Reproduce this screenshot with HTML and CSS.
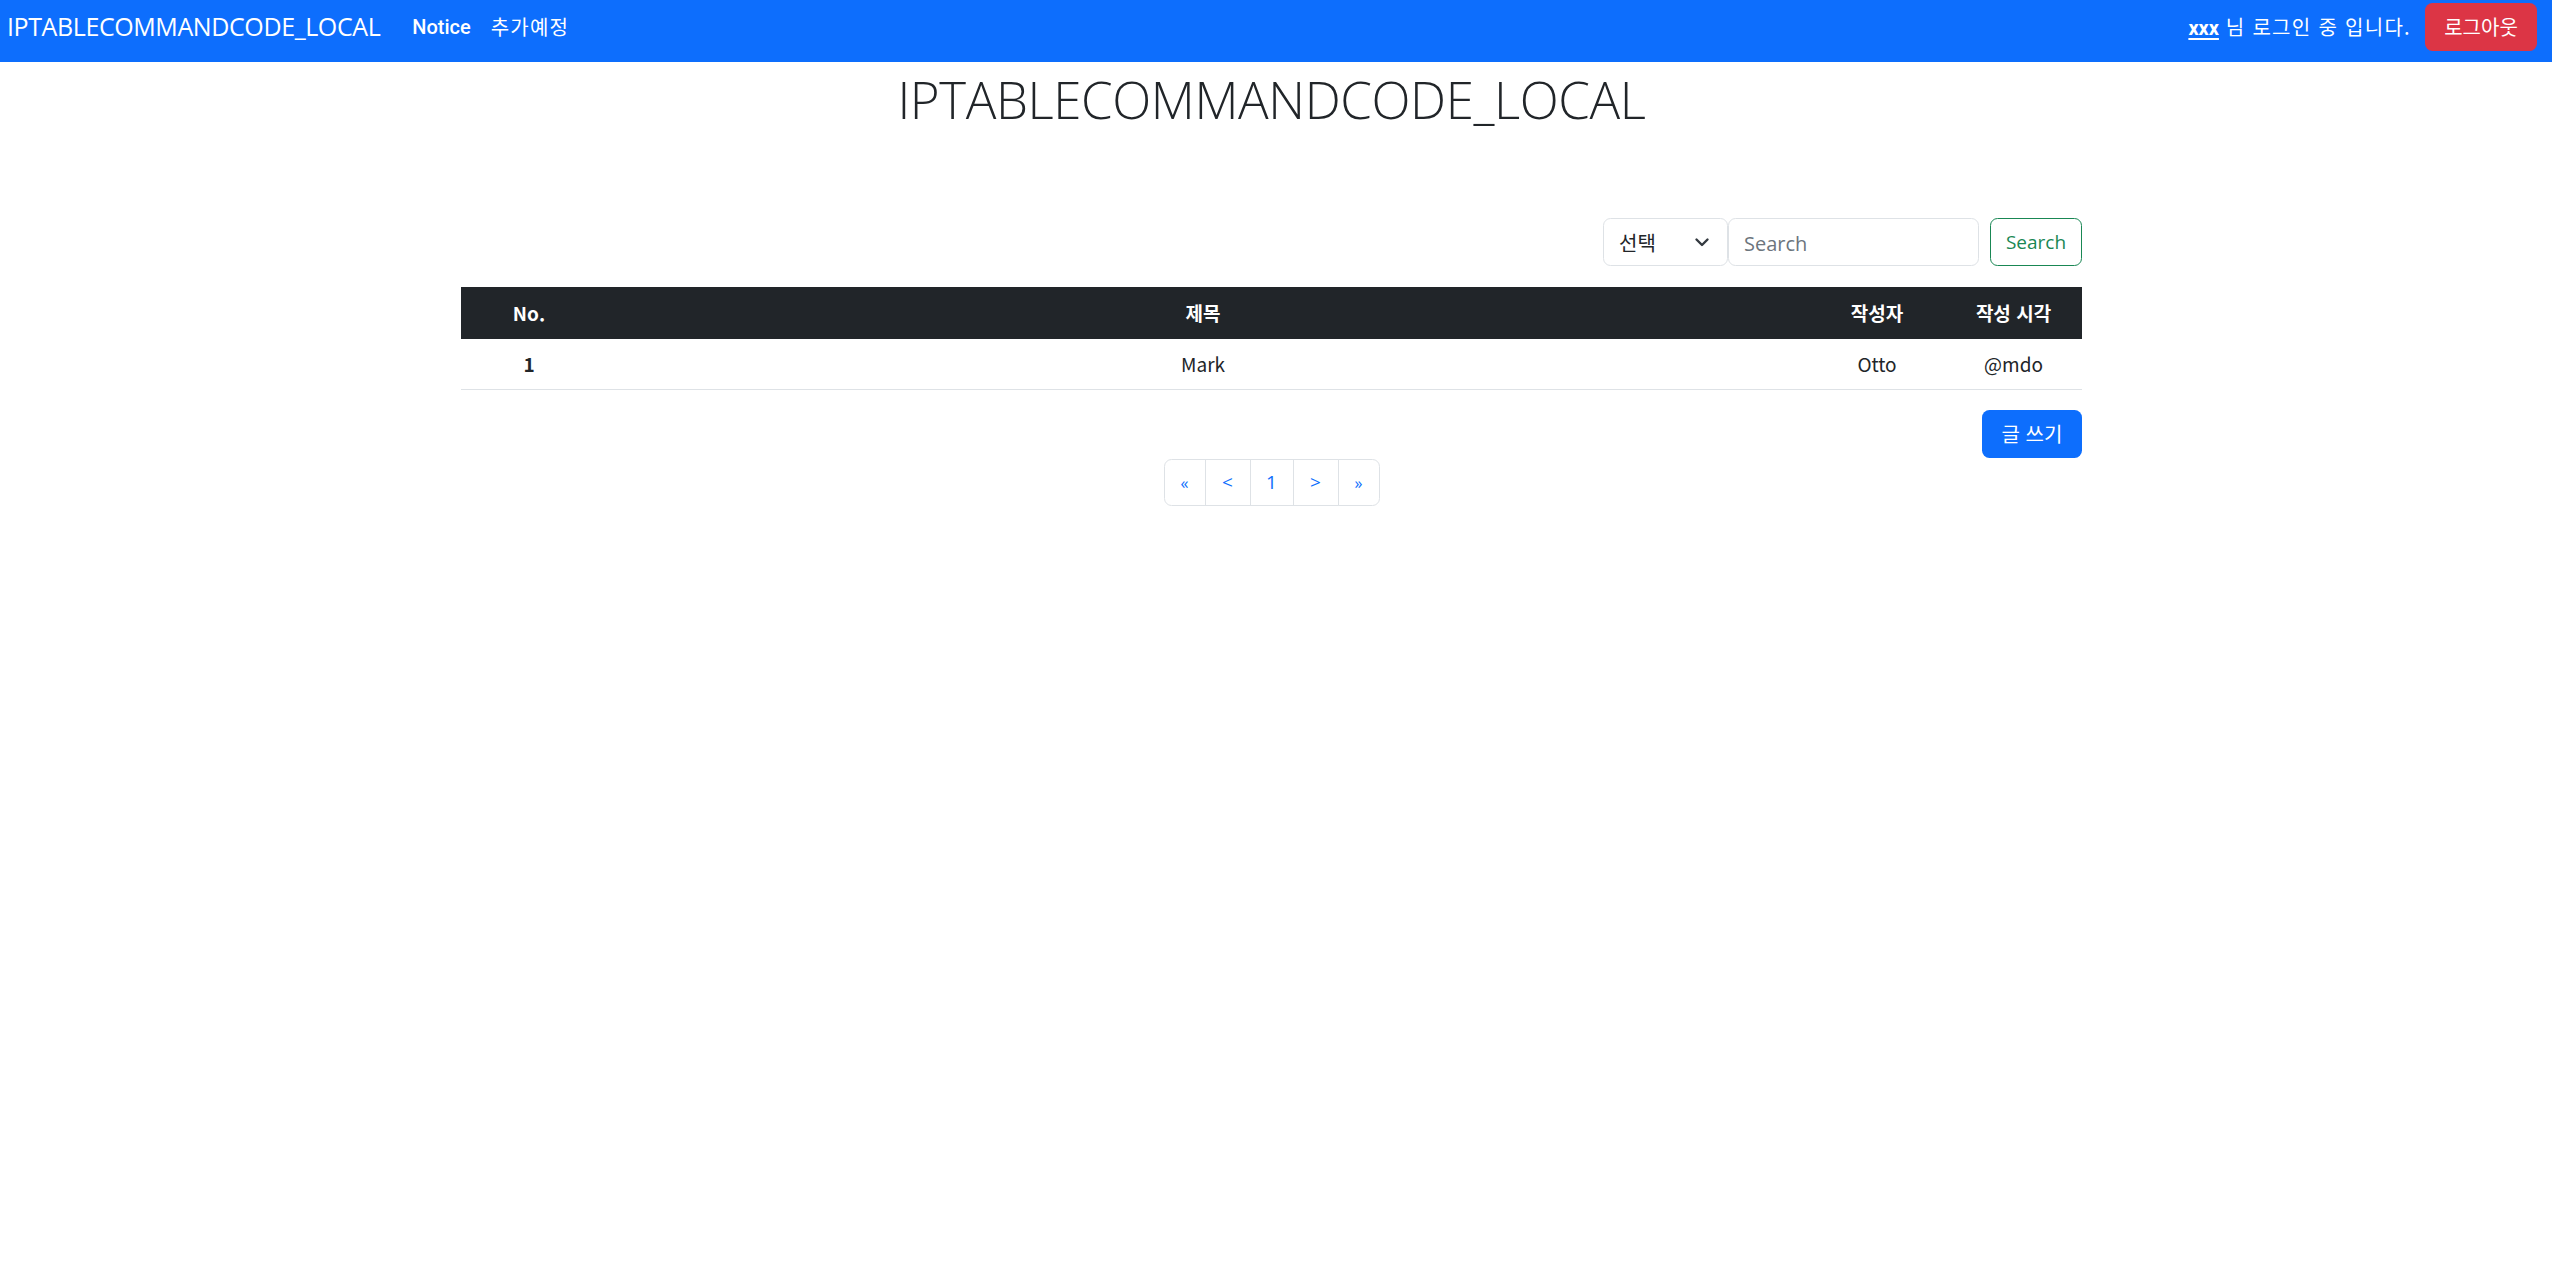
FILE: index.html
```html
<!DOCTYPE html>
<html lang="ko">
<head>
<meta charset="utf-8">
<title>IPTABLECOMMANDCODE_LOCAL</title>
<link rel="stylesheet" href="styles.css">
</head>
<body>
<nav class="navbar">
  <div class="nav-left">
    <a class="brand" href="#">IPTABLECOMMANDCODE_LOCAL</a>
    <a class="nav-link nav-link-strong" href="#">Notice</a>
    <a class="nav-link nav-link-kr" href="#">추가예정</a>
  </div>
  <div class="nav-right">
    <span class="login-text"><a class="user-name" href="#">xxx</a> 님 로그인 중 입니다.</span>
    <button class="btn btn-danger" type="button">로그아웃</button>
  </div>
</nav>

<main class="container">
  <h1 class="page-title">IPTABLECOMMANDCODE_LOCAL</h1>

  <form class="search-form">
    <div class="select-wrap">
      <select class="form-select">
        <option>선택</option>
      </select>
      <svg class="chevron" width="16" height="16" viewBox="0 0 16 16"><path d="M2.5 5.5l5.5 5.5 5.5-5.5" fill="none" stroke="#343a40" stroke-width="2.4" stroke-linecap="round" stroke-linejoin="round"/></svg>
    </div>
    <input class="form-input" type="text" placeholder="Search">
    <button class="btn btn-outline-success" type="button">Search</button>
  </form>

  <table class="board">
    <thead>
      <tr>
        <th class="col-no">No.</th>
        <th class="col-title">제목</th>
        <th class="col-writer">작성자</th>
        <th class="col-time">작성 시각</th>
      </tr>
    </thead>
    <tbody>
      <tr>
        <th class="row-no">1</th>
        <td>Mark</td>
        <td>Otto</td>
        <td>@mdo</td>
      </tr>
    </tbody>
  </table>

  <div class="write-row">
    <button class="btn btn-primary" type="button">글 쓰기</button>
  </div>

  <nav class="pager">
    <ul class="pagination">
      <li><a class="page-link page-edge" href="#">«</a></li>
      <li><a class="page-link page-arrow" href="#">&lt;</a></li>
      <li><a class="page-link page-num" href="#">1</a></li>
      <li><a class="page-link page-arrow" href="#">&gt;</a></li>
      <li><a class="page-link page-edge" href="#">»</a></li>
    </ul>
  </nav>
</main>
</body>
</html>
```

FILE: styles.css
```css
* { box-sizing: border-box; }

html, body {
  margin: 0;
  padding: 0;
  background: #fff;
}

body {
  font-family: "Open Sans", "Noto Sans CJK KR", sans-serif;
  font-size: 20px;
  line-height: 1.5;
  color: #212529;
}

a { text-decoration: none; }

/* ---------- navbar ---------- */
.navbar {
  height: 62px;
  background: #0d6efd;
  display: flex;
  align-items: flex-start;
  justify-content: space-between;
  padding: 3px 15px 0 7px;
}

.nav-left {
  display: flex;
  align-items: center;
  height: 48px;
}

.brand {
  color: #fff;
  font-size: 25px;
  letter-spacing: -0.4px;
  margin-right: 32px;
  white-space: nowrap;
}

.nav-link {
  color: #fff;
  font-family: "Noto Sans CJK KR", sans-serif;
  font-size: 20px;
  margin-right: 20px;
}

.nav-link-kr {
  letter-spacing: 1.2px;
}

.nav-link-strong {
  font-family: "Roboto", "Noto Sans CJK KR", sans-serif;
  font-weight: 500;
  font-size: 20px;
}

.nav-right {
  display: flex;
  align-items: center;
  height: 48px;
}

.login-text {
  color: #fff;
  font-family: "Noto Sans CJK KR", sans-serif;
  font-size: 20px;
  margin-right: 14px;
  letter-spacing: 1.3px;
}

.user-name {
  color: #fff;
  font-family: "Roboto", sans-serif;
  font-weight: 700;
  text-decoration: underline;
  text-underline-offset: 3px;
  letter-spacing: 0;
}

/* ---------- buttons ---------- */
.btn {
  display: inline-flex;
  align-items: center;
  justify-content: center;
  height: 48px;
  padding: 0 16px;
  border: 1px solid transparent;
  border-radius: 7.5px;
  font-family: "Noto Sans CJK KR", sans-serif;
  font-size: 20px;
  line-height: 30px;
  cursor: pointer;
}

.btn-danger {
  background: #dc3545;
  color: #fff;
  width: 112px;
}

.btn-primary {
  background: #0d6efd;
  color: #fff;
  width: 100px;
  height: 48px;
}

.btn-outline-success {
  background: #fff;
  color: #198754;
  border-color: #198754;
  font-family: "Open Sans", sans-serif;
  font-size: 19px;
  width: 92px;
  padding: 0;
}

/* ---------- main ---------- */
.container {
  width: 1621px;
  margin-left: calc(50% - 815px);
}

.page-title {
  margin: 7px 0 0;
  height: 60px;
  text-align: center;
  font-size: 51px;
  font-weight: 300;
  line-height: 60px;
  letter-spacing: -0.4px;
  color: #212529;
}

.search-form {
  display: flex;
  justify-content: flex-end;
  align-items: center;
  margin-top: 89px;
  height: 48px;
}

.select-wrap {
  position: relative;
  width: 125px;
  height: 48px;
}

.form-select {
  appearance: none;
  -webkit-appearance: none;
  width: 100%;
  height: 48px;
  padding: 0 40px 0 15px;
  border: 1px solid #dee2e6;
  border-radius: 7.5px;
  background: #fff;
  font-family: "Noto Sans CJK KR", sans-serif;
  font-size: 20px;
  color: #212529;
}

.chevron {
  position: absolute;
  right: 18px;
  top: 16px;
  pointer-events: none;
}

.form-input {
  width: 251px;
  height: 48px;
  padding: 2px 15px 0;
  border: 1px solid #dee2e6;
  border-radius: 7.5px;
  font-family: "Open Sans", sans-serif;
  font-size: 20px;
  color: #212529;
  margin-right: 11px;
}

.form-input::placeholder {
  color: #6c757d;
}

/* ---------- table ---------- */
.board {
  width: 100%;
  margin-top: 21px;
  border-collapse: collapse;
  table-layout: fixed;
  font-family: "Noto Sans CJK KR", sans-serif;
  font-size: 19px;
}

.board th,
.board td {
  text-align: center;
  line-height: 30px;
  padding: 10px;
}

.board thead th {
  background: #212529;
  color: #fff;
  font-weight: 700;
  padding: 11px 10px;
}

.board tbody th,
.board tbody td {
  border-bottom: 1px solid #dee2e6;
  font-weight: 400;
}

.board tbody th { font-weight: 700; }

.col-no { width: 136px; }
.col-writer { width: 136px; }
.col-time { width: 137px; }

/* ---------- write button & pager ---------- */
.write-row {
  display: flex;
  justify-content: flex-end;
  margin-top: 20px;
}

.pager {
  display: flex;
  justify-content: center;
}

.pagination {
  display: flex;
  list-style: none;
  margin: 1px 0 0;
  padding: 0;
}

.page-link {
  display: flex;
  align-items: center;
  justify-content: center;
  height: 47px;
  padding: 0;
  border: 1px solid #dee2e6;
  margin-left: -1px;
  color: #0d6efd;
  font-family: "Open Sans", sans-serif;
  font-size: 19px;
  background: #fff;
}

.page-edge { width: 42px; font-size: 16px; }
.page-arrow { width: 46px; }
.page-num { width: 44px; }

.pagination li:first-child .page-link {
  margin-left: 0;
  border-radius: 7.5px 0 0 7.5px;
}

.pagination li:last-child .page-link {
  border-radius: 0 7.5px 7.5px 0;
}
```
